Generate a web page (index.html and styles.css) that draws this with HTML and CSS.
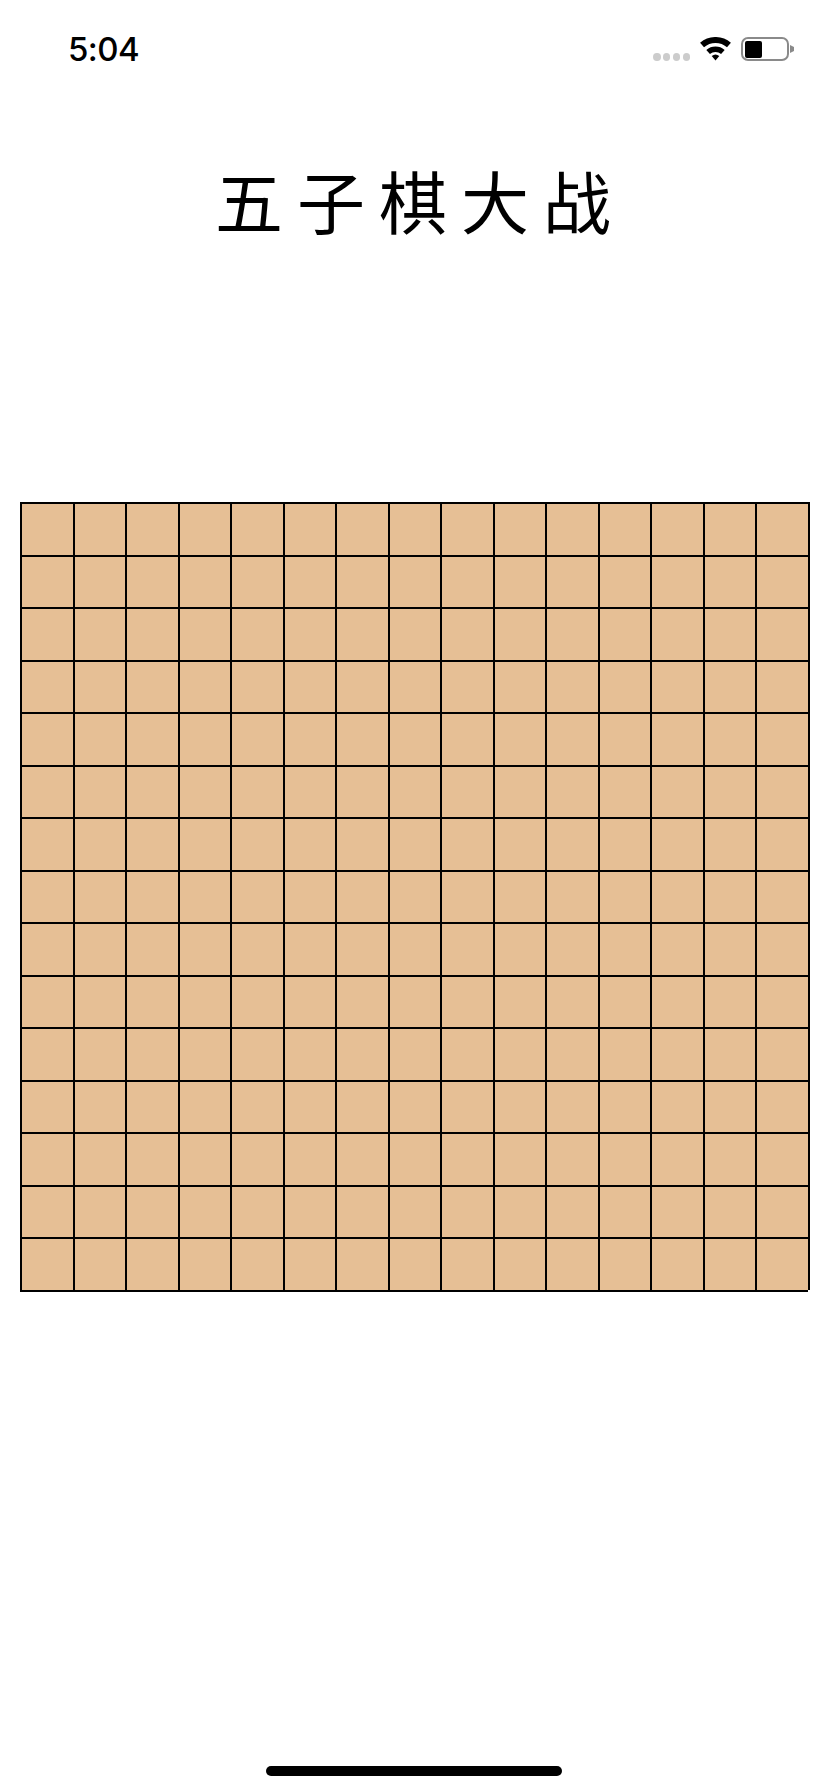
FILE: index.html
```html
<!DOCTYPE html>
<html lang="zh">
<head>
<meta charset="utf-8">
<title>五子棋大战</title>
<link rel="stylesheet" href="styles.css">
</head>
<body>
<div class="page">
  <header class="status">
    <span class="time">5:04</span>
    <div class="indicators">
      <div class="signal"><i></i><i></i><i></i><i></i></div>
      <svg class="wifi" viewBox="0 0 31 24" width="31" height="24" aria-hidden="true">
        <path class="arc a1" d="M2.05 8.02A20.5 20.5 0 0 1 28.95 8.02"/>
        <path class="arc a2" d="M8.12 15.01A11.25 11.25 0 0 1 22.88 15.01"/>
        <path class="wedge" d="M15.5 23.5L11.7 19.12A5.8 5.8 0 0 1 19.3 19.12Z"/>
      </svg>
      <div class="battery"><div class="level"></div></div>
      <div class="tip"></div>
    </div>
  </header>
  <h1 class="title">五子棋大战</h1>
  <main class="board">
    <div class="c"></div><div class="c"></div><div class="c"></div><div class="c"></div><div class="c"></div><div class="c"></div><div class="c"></div><div class="c"></div><div class="c"></div><div class="c"></div><div class="c"></div><div class="c"></div><div class="c"></div><div class="c"></div><div class="c"></div>
    <div class="c"></div><div class="c"></div><div class="c"></div><div class="c"></div><div class="c"></div><div class="c"></div><div class="c"></div><div class="c"></div><div class="c"></div><div class="c"></div><div class="c"></div><div class="c"></div><div class="c"></div><div class="c"></div><div class="c"></div>
    <div class="c"></div><div class="c"></div><div class="c"></div><div class="c"></div><div class="c"></div><div class="c"></div><div class="c"></div><div class="c"></div><div class="c"></div><div class="c"></div><div class="c"></div><div class="c"></div><div class="c"></div><div class="c"></div><div class="c"></div>
    <div class="c"></div><div class="c"></div><div class="c"></div><div class="c"></div><div class="c"></div><div class="c"></div><div class="c"></div><div class="c"></div><div class="c"></div><div class="c"></div><div class="c"></div><div class="c"></div><div class="c"></div><div class="c"></div><div class="c"></div>
    <div class="c"></div><div class="c"></div><div class="c"></div><div class="c"></div><div class="c"></div><div class="c"></div><div class="c"></div><div class="c"></div><div class="c"></div><div class="c"></div><div class="c"></div><div class="c"></div><div class="c"></div><div class="c"></div><div class="c"></div>
    <div class="c"></div><div class="c"></div><div class="c"></div><div class="c"></div><div class="c"></div><div class="c"></div><div class="c"></div><div class="c"></div><div class="c"></div><div class="c"></div><div class="c"></div><div class="c"></div><div class="c"></div><div class="c"></div><div class="c"></div>
    <div class="c"></div><div class="c"></div><div class="c"></div><div class="c"></div><div class="c"></div><div class="c"></div><div class="c"></div><div class="c"></div><div class="c"></div><div class="c"></div><div class="c"></div><div class="c"></div><div class="c"></div><div class="c"></div><div class="c"></div>
    <div class="c"></div><div class="c"></div><div class="c"></div><div class="c"></div><div class="c"></div><div class="c"></div><div class="c"></div><div class="c"></div><div class="c"></div><div class="c"></div><div class="c"></div><div class="c"></div><div class="c"></div><div class="c"></div><div class="c"></div>
    <div class="c"></div><div class="c"></div><div class="c"></div><div class="c"></div><div class="c"></div><div class="c"></div><div class="c"></div><div class="c"></div><div class="c"></div><div class="c"></div><div class="c"></div><div class="c"></div><div class="c"></div><div class="c"></div><div class="c"></div>
    <div class="c"></div><div class="c"></div><div class="c"></div><div class="c"></div><div class="c"></div><div class="c"></div><div class="c"></div><div class="c"></div><div class="c"></div><div class="c"></div><div class="c"></div><div class="c"></div><div class="c"></div><div class="c"></div><div class="c"></div>
    <div class="c"></div><div class="c"></div><div class="c"></div><div class="c"></div><div class="c"></div><div class="c"></div><div class="c"></div><div class="c"></div><div class="c"></div><div class="c"></div><div class="c"></div><div class="c"></div><div class="c"></div><div class="c"></div><div class="c"></div>
    <div class="c"></div><div class="c"></div><div class="c"></div><div class="c"></div><div class="c"></div><div class="c"></div><div class="c"></div><div class="c"></div><div class="c"></div><div class="c"></div><div class="c"></div><div class="c"></div><div class="c"></div><div class="c"></div><div class="c"></div>
    <div class="c"></div><div class="c"></div><div class="c"></div><div class="c"></div><div class="c"></div><div class="c"></div><div class="c"></div><div class="c"></div><div class="c"></div><div class="c"></div><div class="c"></div><div class="c"></div><div class="c"></div><div class="c"></div><div class="c"></div>
    <div class="c"></div><div class="c"></div><div class="c"></div><div class="c"></div><div class="c"></div><div class="c"></div><div class="c"></div><div class="c"></div><div class="c"></div><div class="c"></div><div class="c"></div><div class="c"></div><div class="c"></div><div class="c"></div><div class="c"></div>
    <div class="c"></div><div class="c"></div><div class="c"></div><div class="c"></div><div class="c"></div><div class="c"></div><div class="c"></div><div class="c"></div><div class="c"></div><div class="c"></div><div class="c"></div><div class="c"></div><div class="c"></div><div class="c"></div><div class="c"></div>
  </main>
  <div class="home"></div>
</div>
</body>
</html>
```
FILE: styles.css
```css
* { box-sizing: border-box; }
html, body { margin: 0; padding: 0; background: #fff; }
.page {
  width: 828px;
  height: 1792px;
  display: flex;
  flex-direction: column;
  overflow: hidden;
}
.status {
  height: 88px;
  flex: none;
  display: flex;
  justify-content: space-between;
  align-items: flex-start;
  padding: 0 34px 0 68px;
}
.time {
  margin-top: 31px;
  font: 500 33px/37px Inter, "Liberation Sans", sans-serif;
  letter-spacing: -0.6px;
  color: #000;
}
.indicators {
  display: flex;
  align-items: flex-start;
  padding-top: 37px;
}
.signal {
  display: flex;
  gap: 2.3px;
  margin: 16px 10px 0 0;
}
.signal i {
  width: 7.5px;
  height: 8px;
  border-radius: 50%;
  background: #ccc;
}
.wifi { display: block; margin-right: 10px; }
.arc { fill: none; stroke: #000; }
.a1 { stroke-width: 6; }
.a2 { stroke-width: 5.5; }
.wedge { fill: #000; }
.battery {
  width: 48px;
  height: 24px;
  border: 2px solid #8a8a8a;
  border-radius: 7px;
  padding: 2px 2px 1px;
}
.level {
  width: 17px;
  height: 100%;
  background: #000;
  border-radius: 2px;
}
.tip {
  width: 4px;
  height: 8px;
  margin: 8px 0 0 1px;
  background: #8a8a8a;
  clip-path: polygon(0 0, 100% 25%, 100% 75%, 0 100%);
}
.title {
  margin: 78px 0 0;
  font: 400 68px/68px "Noto Sans CJK SC", sans-serif;
  letter-spacing: 14px;
  text-indent: 12px;
  text-align: center;
  color: #000;
}
.board {
  width: 788px;
  height: 788px;
  flex: none;
  margin: 268px 0 0 20px;
  display: grid;
  grid-template-columns: repeat(15, 1fr);
  grid-template-rows: repeat(15, 1fr);
  box-shadow: 2px 0 0 #000, 0 2px 0 #000;
}
.c {
  background: #e6bf95;
  border-left: 2px solid #000;
  border-top: 2px solid #000;
}
.home {
  width: 296px;
  height: 10px;
  flex: none;
  margin: auto auto 16px;
  border-radius: 5px;
  background: #000;
}
```
